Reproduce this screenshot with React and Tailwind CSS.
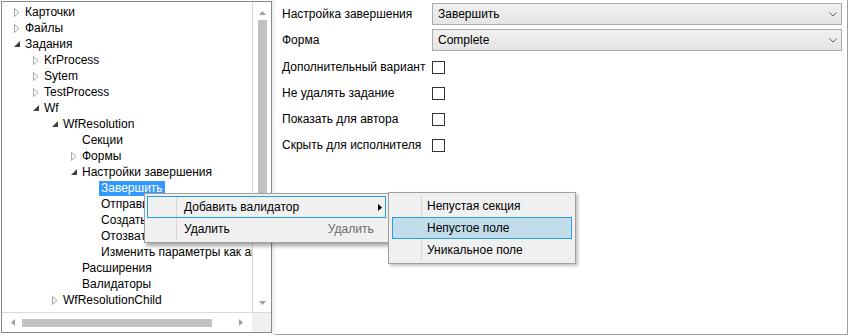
import React from 'react';

const treeItems = [
  { text: 'Карточки', level: 0, arrow: 'collapsed' },
  { text: 'Файлы', level: 0, arrow: 'collapsed' },
  { text: 'Задания', level: 0, arrow: 'expanded' },
  { text: 'KrProcess', level: 1, arrow: 'collapsed' },
  { text: 'Sytem', level: 1, arrow: 'collapsed' },
  { text: 'TestProcess', level: 1, arrow: 'collapsed' },
  { text: 'Wf', level: 1, arrow: 'expanded' },
  { text: 'WfResolution', level: 2, arrow: 'expanded' },
  { text: 'Секции', level: 3 },
  { text: 'Формы', level: 3, arrow: 'collapsed' },
  { text: 'Настройки завершения', level: 3, arrow: 'expanded' },
  { text: 'Завершить', level: 4, selected: true },
  { text: 'Отправить', level: 4 },
  { text: 'Создать', level: 4 },
  { text: 'Отозвать', level: 4 },
  { text: 'Изменить параметры как автор', level: 4 },
  { text: 'Расширения', level: 3 },
  { text: 'Валидаторы', level: 3 },
  { text: 'WfResolutionChild', level: 2, arrow: 'collapsed' },
];

const indent = ['pl-[7px]', 'pl-[26px]', 'pl-[45px]', 'pl-[64px]', 'pl-[83px]'];

const Arrow = ({ kind }) => {
  if (kind === 'collapsed') {
    return (
      <svg width="6" height="9" viewBox="0 0 6 9">
        <path d="M0.5 0.5 L5 4.5 L0.5 8.5 Z" fill="white" stroke="#a6a6a6" strokeWidth="1" />
      </svg>
    );
  }
  if (kind === 'expanded') {
    return (
      <svg width="7" height="7" viewBox="0 0 7 7" className="mt-[1px]">
        <path d="M6 0 L6 6 L0 6 Z" fill="#404040" />
      </svg>
    );
  }
  return null;
};

const TreeRow = ({ item }) => (
  <div className={`flex h-[16px] items-center whitespace-nowrap ${indent[item.level]}`}>
    <div className="flex w-[16px] shrink-0 items-center justify-center">
      <Arrow kind={item.arrow} />
    </div>
    {item.selected ? (
      <span className="-ml-[2px] bg-[#3399ff] px-[2px] leading-[15px] text-white">{item.text}</span>
    ) : (
      <span className="text-black">{item.text}</span>
    )}
  </div>
);

const Combo = ({ value }) => (
  <div className="flex h-[22px] flex-1 items-center justify-between border border-[#acacac] bg-gradient-to-b from-[#f0f0f0] to-[#e5e5e5] pl-[5px] pr-[4px]">
    <span>{value}</span>
    <svg width="8" height="5" viewBox="0 0 8 5">
      <path d="M0.5 0.5 L4 4 L7.5 0.5" fill="none" stroke="#606060" strokeWidth="1" />
    </svg>
  </div>
);

const CheckRow = ({ label }) => (
  <div className="flex h-[26px] items-center">
    <span className="w-[150px] whitespace-nowrap">{label}</span>
    <div className="h-[13px] w-[13px] border border-[#333333] bg-white" />
  </div>
);

export default function App() {
  return (
    <div
      className="relative flex h-[336px] w-[850px] bg-white pb-[1px] pr-[2px] text-[12px] text-black"
      style={{ fontFamily: '"Liberation Sans", Arial, sans-serif' }}
    >
      {/* дерево */}
      <div className="mt-[1px] ml-[1px] flex h-[332px] w-[271px] flex-col border border-[#828790] bg-white">
        <div className="flex min-h-0 flex-1">
          <div className="flex-1 overflow-hidden pt-[2px]">
            {treeItems.map((item, i) => (
              <TreeRow key={i} item={item} />
            ))}
          </div>
          <div className="flex w-[19px] flex-col items-center border-l border-[#d9d9d9] bg-white">
            <svg width="7" height="4" viewBox="0 0 7 4" className="mt-[9px]">
              <path d="M0 4 L3.5 0 L7 4 Z" fill="#a0a0a0" />
            </svg>
            <div className="mt-[5px] h-[176px] w-[9px] bg-[#c2c2c2]" />
            <div className="flex-1" />
            <svg width="7" height="4" viewBox="0 0 7 4" className="mb-[7px]">
              <path d="M0 0 L3.5 4 L7 0 Z" fill="#a0a0a0" />
            </svg>
          </div>
        </div>
        <div className="flex h-[20px] border-t border-[#d9d9d9]">
          <div className="flex flex-1 items-center">
            <svg width="4" height="7" viewBox="0 0 4 7" className="ml-[9px]">
              <path d="M4 0 L0 3.5 L4 7 Z" fill="#a0a0a0" />
            </svg>
            <div className="ml-[7px] h-[8px] w-[190px] bg-[#c2c2c2]" />
            <div className="flex-1" />
            <svg width="4" height="7" viewBox="0 0 4 7" className="mr-[9px]">
              <path d="M0 0 L4 3.5 L0 7 Z" fill="#a0a0a0" />
            </svg>
          </div>
          <div className="w-[19px] bg-[#f0f0f0]" />
        </div>
      </div>

      {/* разделитель */}
      <div className="w-[3px] bg-[#f0f0f0]" />

      {/* свойства */}
      <div className="flex flex-1 flex-col border-b border-r border-[#a0a0a0] pl-[7px] pr-[5px] pt-[3px]">
        <div className="flex flex-col gap-[4px]">
          <div className="flex items-center">
            <span className="w-[150px]">Настройка завершения</span>
            <Combo value="Завершить" />
          </div>
          <div className="flex items-center">
            <span className="w-[150px]">Форма</span>
            <Combo value="Complete" />
          </div>
        </div>
        <div className="mt-[3px]">
          <CheckRow label="Дополнительный вариант" />
          <CheckRow label="Не удалять задание" />
          <CheckRow label="Показать для автора" />
          <CheckRow label="Скрыть для исполнителя" />
        </div>
      </div>

      {/* контекстное меню */}
      <div className="absolute left-[144px] top-[193px] w-[245px] border border-[#a0a0a0] bg-[#f0f0f0] py-[2px] shadow-[2px_3px_4px_rgba(0,0,0,0.35)]">
        <div className="absolute bottom-[2px] left-[31px] top-[2px] w-[1px] bg-[#d7d7d7]" />
        <div className="relative mx-[2px] flex h-[22px] items-center border border-[#26a0da]">
          <span className="ml-[36px]">Добавить валидатор</span>
          <div className="flex-1" />
          <svg width="4" height="7" viewBox="0 0 4 7" className="mr-[3px]">
            <path d="M0 0 L4 3.5 L0 7 Z" fill="#000" />
          </svg>
        </div>
        <div className="relative mx-[2px] flex h-[22px] items-center">
          <span className="ml-[37px]">Удалить</span>
          <span className="ml-[98px] text-[#6d6d6d]">Удалить</span>
        </div>
      </div>

      {/* подменю */}
      <div className="absolute left-[388px] top-[192px] w-[188px] border border-[#a0a0a0] bg-[#f0f0f0] py-[2px] shadow-[2px_2px_3px_rgba(0,0,0,0.25)]">
        <div className="absolute bottom-[2px] left-[32px] top-[2px] w-[1px] bg-[#d7d7d7]" />
        <div className="relative mx-[3px] flex h-[22px] items-center">
          <span className="ml-[35px]">Непустая секция</span>
        </div>
        <div className="relative mx-[3px] flex h-[22px] items-center border border-[#26a0da] bg-[#c1dcea]">
          <span className="ml-[34px]">Непустое поле</span>
        </div>
        <div className="relative mx-[3px] flex h-[22px] items-center">
          <span className="ml-[35px]">Уникальное поле</span>
        </div>
      </div>
    </div>
  );
}
